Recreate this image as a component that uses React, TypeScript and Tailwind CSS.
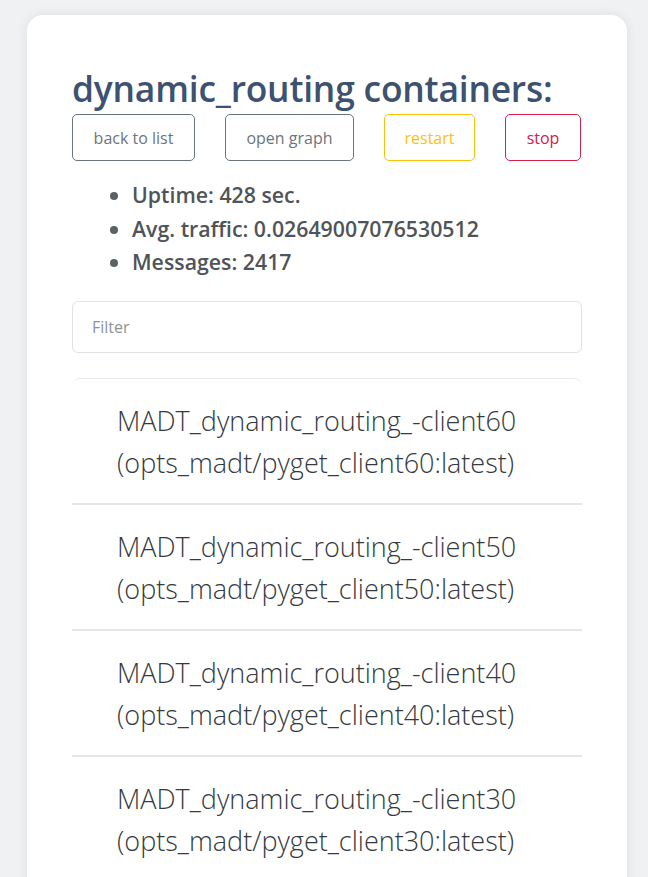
import React, { useState } from 'react';

const containers = [
  { name: 'MADT_dynamic_routing_-client60', image: 'opts_madt/pyget_client60:latest' },
  { name: 'MADT_dynamic_routing_-client50', image: 'opts_madt/pyget_client50:latest' },
  { name: 'MADT_dynamic_routing_-client40', image: 'opts_madt/pyget_client40:latest' },
  { name: 'MADT_dynamic_routing_-client30', image: 'opts_madt/pyget_client30:latest' },
  { name: 'MADT_dynamic_routing_-client20', image: 'opts_madt/pyget_client20:latest' },
];

const App: React.FC = () => {
  const [filter, setFilter] = useState('');
  const shown = containers.filter(c => c.name.includes(filter) || c.image.includes(filter));

  return (
    <div className="min-h-screen bg-[#f0f1f3] pl-[27px] pr-[21px] pt-[15px] font-['Open_Sans',sans-serif]">
      <div className="bg-white rounded-2xl shadow-[0_0_12px_rgba(0,0,0,0.08)] px-[45px] pt-[50px] pb-10">
        <h1 className="text-[35.4px] leading-[46px] font-semibold text-[#3d5170] tracking-[-0.2px]">dynamic_routing containers:</h1>
        <div className="flex gap-[30px] mt-[3px]">
          <button className="w-[123px] h-[47px] border border-[#6c757d] rounded-[5px] text-[16px] text-[#6c757d]">back to list</button>
          <button className="w-[129px] h-[47px] border border-[#6c757d] rounded-[5px] text-[16px] text-[#6c757d]">open graph</button>
          <button className="w-[91px] h-[47px] border border-[#ffc107] rounded-[5px] text-[16px] text-[#ffc107]">restart</button>
          <button className="w-[76px] h-[47px] border border-[#d3204a] rounded-[5px] text-[16px] text-[#d3204a]">stop</button>
        </div>
        <ul className="list-disc pl-[60px] mt-[17px] text-[21.3px] leading-[33.5px] font-semibold text-[#4f5459] marker:text-[#5c6166]">
          <li>Uptime: 428 sec.</li>
          <li>Avg. traffic: 0.02649007076530512</li>
          <li>Messages: 2417</li>
        </ul>
        <input
          value={filter}
          onChange={e => setFilter(e.target.value)}
          placeholder="Filter"
          className="mt-[22px] w-full h-[52px] border border-[#dee2e6] rounded-md px-[19px] text-[16px] text-[#495057] placeholder:text-[#8a939b] outline-none"
        />
        <div className="mt-[25px] border-t border-[#e9ecef] rounded-t-lg">
          {shown.map(c => (
            <div key={c.name} className="border-b-2 border-[#e3e5e8] px-[45px] pt-[21px] pb-[19px] text-[27px] leading-[42px] font-light text-[#343a40]">
              <div>{c.name}</div>
              <div>({c.image})</div>
            </div>
          ))}
        </div>
      </div>
    </div>
  );
};

export default App;
